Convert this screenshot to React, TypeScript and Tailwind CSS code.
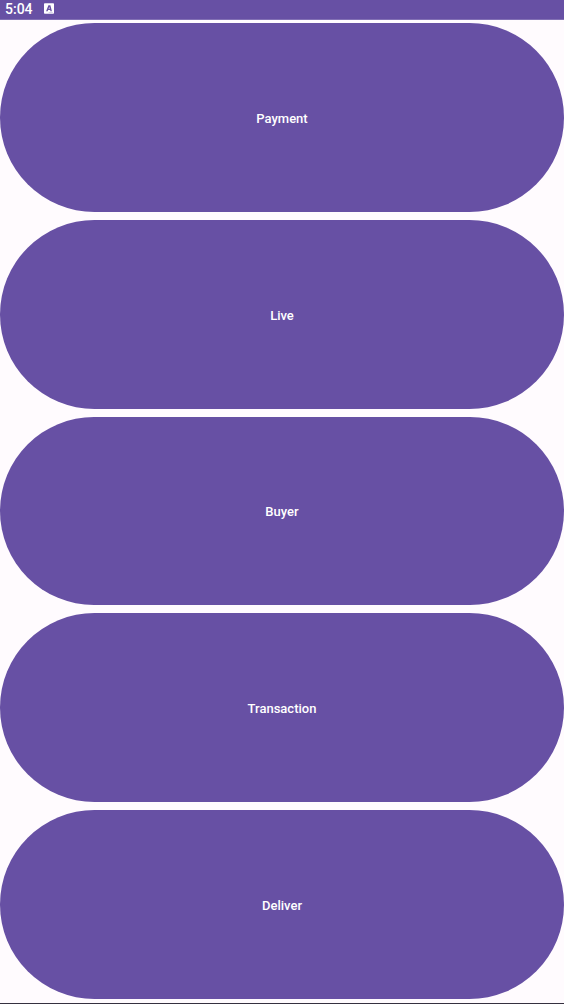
const labels: string[] = ['Payment', 'Live', 'Buyer', 'Transaction', 'Deliver'];

function StatusBar() {
  return (
    <header className="flex h-5 shrink-0 items-center gap-[11px] border-b border-[#8270b4] bg-[#6750a4] px-[5px] pb-0.5 text-white">
      <time className="text-sm leading-4 font-medium">5:04</time>
      <svg viewBox="0 0 10 11" className="h-[11px] w-[10px]" aria-hidden="true">
        <path
          fill="currentColor"
          fillRule="evenodd"
          d="M.8.3h8.4a.8.8 0 0 1 .8.8v8.8a.8.8 0 0 1-.8.8H.8a.8.8 0 0 1-.8-.8V1.1A.8.8 0 0 1 .8.3ZM4.4 2.3 2.1 8.2h1.5l.5-1.2h2.1l.2 1.2h1.5L6.4 2.3ZM5.3 4l.5 1.8H4.6ZM4.6 9.4v.4h4.2v-.4Z"
        />
      </svg>
    </header>
  );
}

export default function App() {
  return (
    <div className="flex min-h-screen flex-col border-b border-[#35303f] bg-[#fffbfe] font-[Roboto,sans-serif]">
      <StatusBar />
      <main className="flex grow flex-col gap-2 pt-[3px] pb-1">
        {labels.map((label) => (
          <button
            key={label}
            type="button"
            className="min-h-12 flex-1 rounded-full bg-[#6750a4] pt-[3px] text-[13px] leading-5 font-medium text-white"
          >
            {label}
          </button>
        ))}
      </main>
    </div>
  );
}
